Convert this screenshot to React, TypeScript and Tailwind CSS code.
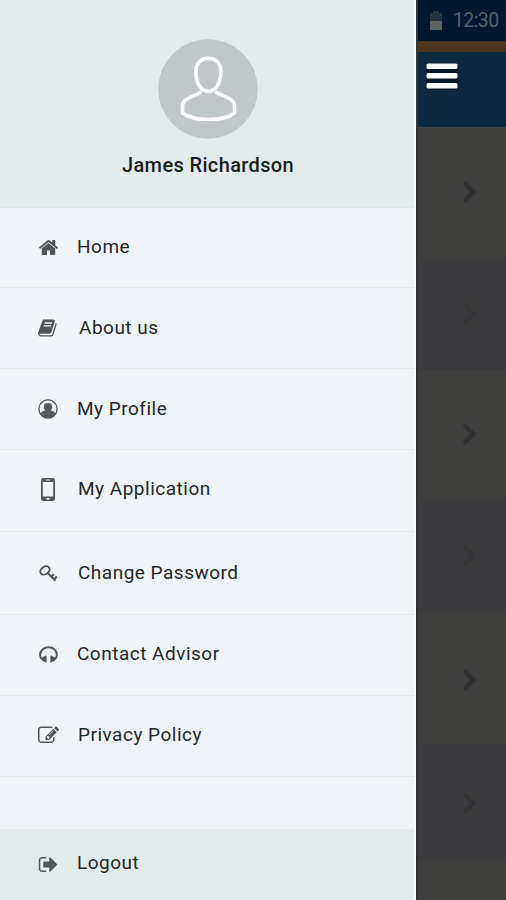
import React from 'react';

type IconProps = { className?: string };

const HomeIcon: React.FC<IconProps> = ({ className }) => (
  <svg viewBox="0 0 1792 1792" fill="currentColor" className={className}>
    <path d="M1472 992v480q0 26-19 45t-45 19h-384v-384h-256v384h-384q-26 0-45-19t-19-45v-480q0-1 .5-3t.5-3l575-474 575 474q1 2 1 6zm223-69l-62 74q-8 9-21 11h-3q-13 0-21-7l-692-577-692 577q-12 8-24 7-13-2-21-11l-62-74q-8-10-7-23.5t11-21.5l719-599q32-26 76-26t76 26l244 204v-195q0-14 9-23t23-9h192q14 0 23 9t9 23v408l219 182q10 8 11 21.5t-7 23.5z" />
  </svg>
);

const BookIcon: React.FC<IconProps> = ({ className }) => (
  <svg viewBox="0 0 1792 1792" fill="currentColor" className={className}>
    <path d="M1639 478q40 57 18 129l-275 906q-19 64-76.5 107.5t-122.5 43.5h-923q-77 0-148.5-53.5t-99.5-131.5q-24-67-2-127 0-4 3-27t4-37q1-8-3-21.5t-3-19.5q2-11 8-21t16.5-23.5 16.5-23.5q23-38 45-91.5t30-91.5q3-10 .5-30t-.5-28q3-11 17-28t17-23q21-36 42-92t25-90q1-9-2.5-32t.5-28q4-13 22-30.5t22-22.5q19-26 42.5-84.5t27.5-96.5q1-8-3-25.5t-2-26.5q2-8 9-18t18-23 17-21q8-12 16.5-30.5t15-35 16-36 19.5-32 26.5-23.5 36-11.5 47.5 5.5l-1 3q38-9 51-9h761q74 0 114 56t18 130l-274 906q-36 119-71.5 153.5t-128.5 34.5h-869q-27 0-38 15-11 16-1 43 24 70 144 70h923q29 0 56-15.5t35-41.5l300-987q7-22 5-57 38 15 59 43zm-1064 2q-4 13 2 22.5t20 9.5h608q13 0 25.5-9.5t16.5-22.5l21-64q4-13-2-22.5t-20-9.5h-608q-13 0-25.5 9.5t-16.5 22.5zm-83 256q-4 13 2 22.5t20 9.5h608q13 0 25.5-9.5t16.5-22.5l21-64q4-13-2-22.5t-20-9.5h-608q-13 0-25.5 9.5t-16.5 22.5z" />
  </svg>
);

const ProfileIcon: React.FC<IconProps> = ({ className }) => (
  <svg viewBox="0 0 20 20" className={className}>
    <circle cx="10" cy="10" r="9.1" fill="none" stroke="currentColor" strokeWidth="1.3" />
    <path d="M10 4c2.500 0 4.200 1.600 4.200 4 0 1.500-.7 2.800-1.700 3.600 2.200.4 4 1.300 4.900 2.900A8.500 8.500 0 0 1 10 18.800a8.500 8.500 0 0 1-7.400-4.300c.9-1.600 2.700-2.500 4.900-2.900C6.500 10.800 5.800 9.500 5.800 8c0-2.400 1.700-4 4.200-4z" fill="currentColor" />
  </svg>
);

const PhoneIcon: React.FC<IconProps> = ({ className }) => (
  <svg viewBox="0 0 14 23" className={className}>
    <path fillRule="evenodd" fill="currentColor" d="M2.500 0h9A2.500 2.500 0 0 1 14 2.500v18a2.500 2.500 0 0 1-2.500 2.500h-9A2.500 2.500 0 0 1 0 20.500v-18A2.500 2.500 0 0 1 2.500 0zM1.800 4v14.500h10.400V4zM5 1.600v1h4v-1zM5.500 20v1.500h3V20z" />
  </svg>
);

const KeyIcon: React.FC<IconProps> = ({ className }) => (
  <svg viewBox="0 0 20 18" fill="none" stroke="currentColor" className={className}>
    <ellipse cx="6.300" cy="5.800" rx="5.300" ry="3.900" transform="rotate(-35 6.300 5.800)" strokeWidth="2" />
    <path d="M8.800 8.100l8.700 8.600M13.300 12.500l2.500-2.700M16 15l2.900-2.900" strokeWidth="2.200" />
  </svg>
);

const HeadphonesIcon: React.FC<IconProps> = ({ className }) => (
  <svg viewBox="0 0 20 18" className={className}>
    <path d="M3.600 14.300C1.800 12.800 1.100 11.400 1.100 9.500c0-4.700 3.900-8.200 8.900-8.200s8.900 3.500 8.900 8.200c0 1.900-.7 3.300-2.500 4.800" fill="none" stroke="currentColor" strokeWidth="2.100" />
    <path d="M8 10v7.500H6.400v-.8c-2 0-3.700-1.200-3.700-2.900s1.700-3 3.700-3V10zM12 10v7.500h1.600v-.8c2 0 3.700-1.200 3.700-2.900s-1.700-3-3.700-3V10z" fill="currentColor" />
  </svg>
);

const EditIcon: React.FC<IconProps> = ({ className }) => (
  <svg viewBox="0 0 1792 1792" fill="currentColor" className={className}>
    <path d="M888 1184l116-116-152-152-116 116v56h96v96h56zm440-720q-16-16-33 1l-350 350q-17 17-1 33t33-1l350-350q17-17 1-33zm80 594v190q0 119-84.500 203.500t-203.500 84.500h-832q-119 0-203.500-84.500t-84.500-203.500v-832q0-119 84.500-203.500t203.500-84.500h832q63 0 117 25 15 7 18 23 3 17-9 29l-49 49q-14 14-32 8-23-6-45-6h-832q-66 0-113 47t-47 113v832q0 66 47 113t113 47h832q66 0 113-47t47-113v-126q0-13 9-22l64-64q15-15 35-7t20 29zm-96-738l288 288-672 672h-288v-288zm444 132l-92 92-288-288 92-92q28-28 68-28t68 28l152 152q28 28 28 68t-28 68z" />
  </svg>
);

const LogoutIcon: React.FC<IconProps> = ({ className }) => (
  <svg viewBox="0 0 1792 1792" fill="currentColor" className={className}>
    <path d="M704 1440q0 4 1 20t.5 26.500-3 23.500-10 19.500-20.500 6.500h-320q-119 0-203.500-84.500t-84.500-203.500v-704q0-119 84.500-203.500t203.500-84.500h320q13 0 22.500 9.500t9.500 22.500q0 4 1 20t.5 26.500-3 23.500-10 19.500-20.500 6.500h-320q-66 0-113 47t-47 113v704q0 66 47 113t113 47h312l11.500 1 11.500 3 8 5.500 7 9 2 13.500zm928-544q0 26-19 45l-544 544q-19 19-45 19t-45-19-19-45v-288h-448q-26 0-45-19t-19-45v-384q0-26 19-45t45-19h448v-288q0-26 19-45t45-19 45 19l544 544q19 19 19 45z" />
  </svg>
);

const menu = [
  { label: 'Home', icon: <HomeIcon className="w-[21px] h-[21px]" />, row: 'h-[80px] pb-px', text: 'pl-[17px]' },
  { label: 'About us', icon: <BookIcon className="w-[20px] h-[20px]" />, row: 'h-[81px]', text: 'pl-[19px]' },
  { label: 'My Profile', icon: <ProfileIcon className="w-5 h-5" />, row: 'h-[81px]', text: 'pl-[17px]' },
  { label: 'My Application', icon: <PhoneIcon className="w-[14px] h-[23px]" />, row: 'h-[82px] pb-[2px]', text: 'pl-[18px]' },
  { label: 'Change Password', icon: <KeyIcon className="w-[19px] h-[17px]" />, row: 'h-[83px]', text: 'pl-[18px]' },
  { label: 'Contact Advisor', icon: <HeadphonesIcon className="w-[19px] h-[17px]" />, row: 'h-[81px] pb-[2px]', text: 'pl-[17px]' },
  { label: 'Privacy Policy', icon: <EditIcon className="w-[21px] h-[21px]" />, row: 'h-[81px] pb-[2px]', text: 'pl-[18px]' },
];

const rows = [
  { bg: 'h-[130px] bg-[#40403f]', arrow: 'text-[#313332]' },
  { bg: 'h-[113px] bg-[#3c3c3e]', arrow: 'text-[#37373a]' },
  { bg: 'h-[127px] bg-[#40403f]', arrow: 'text-[#313332]' },
  { bg: 'h-[115px] bg-[#3c3c3e]', arrow: 'text-[#37373a]' },
  { bg: 'h-[132px] pt-[4px] bg-[#40403f]', arrow: 'text-[#313332]' },
  { bg: 'h-[116px] pt-[2px] bg-[#3c3c3e]', arrow: 'text-[#343437]' },
];

const Drawer: React.FC = () => (
  <aside className="w-[416px] h-full shrink-0 flex flex-col bg-[#f0f4f8] border-r-2 border-[#f8fbfb]">
    <div className="h-[208px] shrink-0 bg-[#e3eaeb] border-b border-[#dde3e5] flex flex-col items-center pt-[39px] pl-[2px]">
      <svg viewBox="0 0 100 100" className="w-[100px] h-[100px]">
        <circle cx="50" cy="50" r="49.300" fill="#c1c7c9" stroke="#b7bebf" strokeWidth=".7" />
        <g fill="none" stroke="#fff" strokeWidth="3.600" strokeLinecap="round">
          <path d="M50.300 19.400C58 19.400 62.800 24.500 62.800 33c0 11-5.200 19.200-12.500 19.200S37.800 44 37.800 33c0-8.500 4.800-13.600 12.500-13.600z" />
          <path d="M42.300 53.500C37 57.500 25 58.500 24.500 66.500v7.500c6 4.500 15 6.500 26 6.500s20-2 26-6.500v-7.500C76 58.500 64 57.500 58.700 53.500" />
        </g>
      </svg>
      <span className="mt-[12px] text-[20px] leading-[28px] font-medium tracking-[0.36px] text-[#1b1e20]">James Richardson</span>
    </div>

    <nav className="flex-1">
      {menu.map(({ label, icon, row, text }) => (
        <a key={label} className={`${row} flex items-center pl-[36px] border-b border-[#e3e8ea]`}>
          <span className="w-6 flex justify-center text-[#515658]">{icon}</span>
          <span className={`${text} text-[19px] tracking-[0.5px] text-[#242729]`}>{label}</span>
        </a>
      ))}
    </nav>

    <a className="h-[71px] shrink-0 bg-[#e3eaeb] flex items-center pl-[36px] pb-[3px]">
      <span className="w-6 flex justify-center text-[#515658]">
        <LogoutIcon className="w-[21px] h-[21px] mt-[2px]" />
      </span>
      <span className="pl-[17px] text-[19px] tracking-[0.5px] text-[#242729]">Logout</span>
    </a>
  </aside>
);

export default function App() {
  return (
    <div className="w-[506px] h-[900px] flex overflow-hidden font-['Roboto',sans-serif]">
      <Drawer />

      {/* Dimmed page behind the drawer */}
      <div className="flex-1 flex flex-col bg-[#40403f] border-l-2 border-[#303636]">
        <div className="h-[41px] shrink-0 bg-[#03182c] flex items-center pl-[12px]">
          <svg viewBox="0 0 12 19" className="w-3 h-[19px]">
            <path d="M3 0h6v2h3v8H0V2h3z" fill="#253441" />
            <path d="M0 10h12v9H0z" fill="#5d6265" />
          </svg>
          <span className="ml-[11px] text-[19.5px] tracking-[-0.6px] text-[#53616c] whitespace-nowrap">12:30</span>
        </div>
        <div className="h-[11px] shrink-0 bg-[#4a3420]" />
        <div className="h-[75px] shrink-0 bg-[#0c293d] pt-[11px] pl-[8px]">
          <svg viewBox="0 0 32 27" className="w-8 h-[27px]">
            <rect width="32" height="27" rx="2" fill="#041526" />
            <g fill="#fff">
              <rect x=".5" y=".5" width="31" height="5.500" rx="1.500" />
              <rect x=".5" y="10" width="31" height="5.500" rx="1.500" />
              <rect x=".5" y="20" width="31" height="5.500" rx="1.500" />
            </g>
          </svg>
        </div>
        {rows.map(({ bg, arrow }, i) => (
          <div key={i} className={`${bg} shrink-0 flex items-center pl-[42px]`}>
            <svg viewBox="0 0 18 26" className={`w-[18px] h-[26px] ${arrow}`}>
              <path d="M4 3.500l9 9.500-9 9.500" fill="none" stroke="currentColor" strokeWidth="4.600" />
            </svg>
          </div>
        ))}
      </div>
    </div>
  );
}
